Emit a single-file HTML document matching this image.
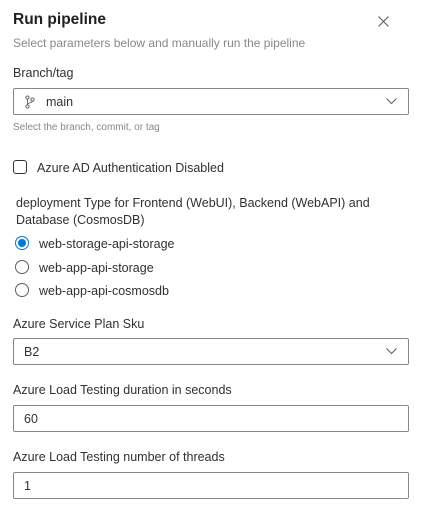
<!DOCTYPE html>
<html><head><meta charset="utf-8"><style>
*{box-sizing:border-box;margin:0;padding:0}
body{width:421px;height:513px;background:#fff;font-family:"Liberation Sans",sans-serif;color:#323130;position:relative;overflow:hidden}
.a{position:absolute;white-space:nowrap}
.lbl{font-size:12.5px;color:#323130}
.box{position:absolute;left:13px;width:396px;height:27px;border:1px solid #8a8886;border-radius:2px;font-size:12.5px;padding-left:10px;line-height:27px}
.chev{position:absolute;right:11px;top:9px}
.radio{position:absolute;left:15px;width:14px;height:14px;border:1px solid #605e5c;border-radius:50%}
.rt{font-size:12.5px}
</style></head><body>
<div class="a" style="left:13px;top:11px;font-size:15.5px;font-weight:600;color:#201f1e">Run pipeline</div>
<svg class="a" style="left:378px;top:16px" width="11" height="11" viewBox="0 0 11 11"><path d="M0.5 0.5L10.5 10.5M10.5 0.5L0.5 10.5" stroke="#605e5c" stroke-width="1.1"/></svg>
<div class="a" style="left:13px;top:36px;font-size:12px;color:#8a8886">Select parameters below and manually run the pipeline</div>
<div class="a lbl" style="left:13px;top:66px">Branch/tag</div>
<div class="box" style="top:88px;padding-left:32px">main
<svg style="position:absolute;left:11px;top:6px" width="10" height="14" viewBox="0 0 10 14"><circle cx="2.5" cy="2.5" r="1.6" fill="none" stroke="#605e5c" stroke-width="0.9"/><circle cx="2.5" cy="11.5" r="1.6" fill="none" stroke="#605e5c" stroke-width="0.9"/><circle cx="7.5" cy="4.5" r="1.6" fill="none" stroke="#605e5c" stroke-width="0.9"/><path d="M2.5 4.1V9.9M7.5 6.1C7.5 8 2.5 7.5 2.5 9.5" fill="none" stroke="#605e5c" stroke-width="0.9"/></svg>
<svg class="chev" width="11" height="7" viewBox="0 0 11 7"><path d="M0.5 0.5L5.5 5.5L10.5 0.5" fill="none" stroke="#605e5c" stroke-width="1"/></svg></div>
<div class="a" style="left:13px;top:122px;font-size:10px;color:#8a8886">Select the branch, commit, or tag</div>
<div class="a" style="left:13px;top:160px;width:14px;height:14px;border:1px solid #323130;border-radius:3px"></div>
<div class="a lbl" style="left:37px;top:161px">Azure AD Authentication Disabled</div>
<div class="a lbl" style="left:16px;top:195px;line-height:17px">deployment Type for Frontend (WebUI), Backend (WebAPI) and<br>Database (CosmosDB)</div>
<div class="radio" style="top:236px;border-color:#0078d4"><div style="position:absolute;left:2px;top:2px;width:8px;height:8px;border-radius:50%;background:#0078d4"></div></div>
<div class="a rt" style="left:39px;top:237px">web-storage-api-storage</div>
<div class="radio" style="top:260px"></div>
<div class="a rt" style="left:39px;top:261px">web-app-api-storage</div>
<div class="radio" style="top:283px"></div>
<div class="a rt" style="left:39px;top:284px">web-app-api-cosmosdb</div>
<div class="a lbl" style="left:13px;top:317px">Azure Service Plan Sku</div>
<div class="box" style="top:338px">B2<svg class="chev" width="11" height="7" viewBox="0 0 11 7"><path d="M0.5 0.5L5.5 5.5L10.5 0.5" fill="none" stroke="#605e5c" stroke-width="1"/></svg></div>
<div class="a lbl" style="left:13px;top:383px">Azure Load Testing duration in seconds</div>
<div class="box" style="top:405px">60</div>
<div class="a lbl" style="left:13px;top:450px">Azure Load Testing number of threads</div>
<div class="box" style="top:472px">1</div>
</body></html>
